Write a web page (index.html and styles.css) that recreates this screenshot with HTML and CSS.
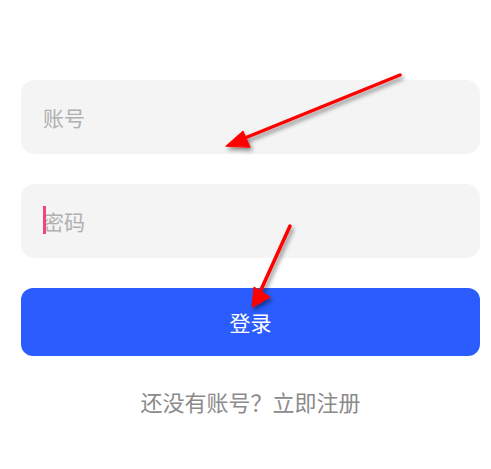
FILE: index.html
```html
<!DOCTYPE html>
<html lang="zh">
<head>
<meta charset="utf-8">
<link rel="stylesheet" href="styles.css">
</head>
<body>
<div class="page">
  <form class="form">
    <div class="field"><span class="placeholder">账号</span></div>
    <div class="field"><span class="cursor"></span><span class="placeholder">密码</span></div>
    <button type="button" class="login">登录</button>
    <p class="register">还没有账号？立即注册</p>
  </form>
  <svg class="arrows" width="491" height="469" viewBox="0 0 491 469">
    <defs>
      <filter id="sh" x="-20%" y="-20%" width="140%" height="140%">
        <feDropShadow dx="2" dy="3" stdDeviation="2" flood-color="#000" flood-opacity="0.45"/>
      </filter>
    </defs>
    <g filter="url(#sh)" fill="#ff0000" stroke="#ff0000" stroke-linecap="round">
      <line x1="400" y1="75" x2="240" y2="140" stroke-width="3.5"/>
      <polygon points="226,146 243,131 250,147" stroke-width="1" stroke-linejoin="round"/>
      <line x1="290" y1="226" x2="260" y2="292" stroke-width="3.5"/>
      <polygon points="252,307 254,287 270,297" stroke-width="1" stroke-linejoin="round"/>
    </g>
  </svg>
</div>
</body>
</html>
```

FILE: styles.css
```css
html, body {
  margin: 0;
  padding: 0;
  background: #ffffff;
}
.page {
  position: relative;
  width: 491px;
  height: 469px;
  overflow: hidden;
  font-family: "Noto Sans CJK SC", "Noto Sans", sans-serif;
}
.form {
  display: flex;
  flex-direction: column;
  gap: 30px;
  padding: 80px 11px 0 21px;
  margin: 0;
}
.field {
  position: relative;
  height: 74px;
  border-radius: 14px;
  background: #f4f4f4;
  display: flex;
  align-items: center;
  padding-left: 22px;
}
.placeholder {
  font-size: 21px;
  color: #b0b0b0;
  line-height: 1;
}
.cursor {
  position: absolute;
  left: 22px;
  top: 22px;
  width: 3px;
  height: 28px;
  background: #f2457c;
}
.login {
  height: 68px;
  border: none;
  border-radius: 12px;
  background: #2b5dfe;
  color: #ffffff;
  font-family: inherit;
  font-size: 21px;
  padding: 0;
  margin: 0;
}
.register {
  margin: 4px 0 0;
  text-align: center;
  font-size: 22px;
  line-height: 1;
  color: #8a8a8a;
}
.arrows {
  position: absolute;
  left: 0;
  top: 0;
  pointer-events: none;
}
```
